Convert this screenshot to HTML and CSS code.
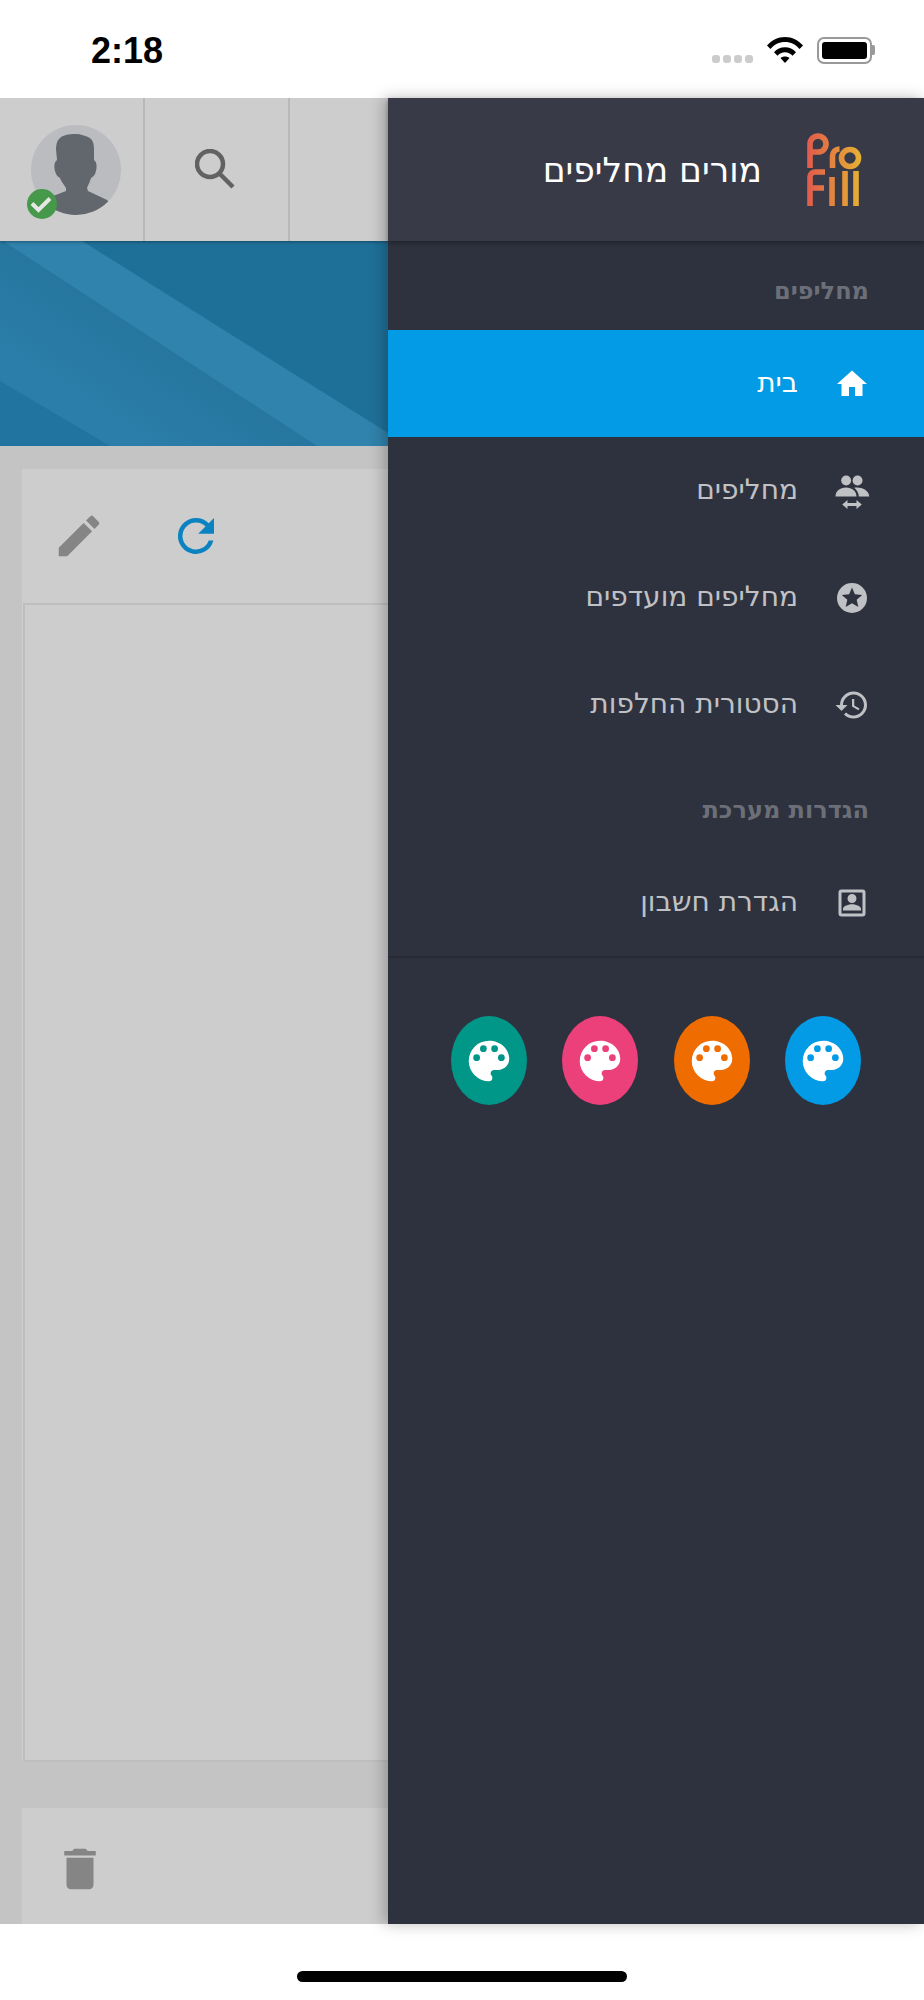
FILE: index.html
```html
<!DOCTYPE html>
<html lang="he">
<head>
    <meta charset="UTF-8">
    <meta name="viewport" content="width=device-width, initial-scale=1.0">
    <title>מורים מחליפים</title>
    <link rel="stylesheet" href="styles.css">
</head>
<body>
    <!-- Status bar -->
    <div class="status-bar">
        <div class="status-time">2:18</div>
        <div class="status-icons">
            <div class="signal-dots"><span></span><span></span><span></span><span></span></div>
            <svg class="wifi" viewBox="0 0 36 26"><path d="M0 8.600C4.500 3.200 11 0 18 0s13.500 3.200 18 8.600l-3.500 3.500C28.900 7.600 23.800 5 18 5S7.100 7.600 3.500 12.100z"/><path d="M7 15.200c2.800-3.100 6.700-4.900 11-4.900s8.200 1.800 11 4.900l-3.500 3.600c-1.900-2.200-4.500-3.500-7.500-3.500s-5.600 1.300-7.500 3.500z"/><path d="M13.500 21c1.200-1 2.800-1.500 4.500-1.500s3.300.5 4.500 1.500L18 26z"/></svg>
            <div class="battery"><div class="battery-fill"></div></div>
        </div>
    </div>

    <div class="screen">
        <!-- Page behind the drawer -->
        <div class="page">
            <div class="topbar">
                <div class="topbar-cell avatar-cell">
                    <div class="avatar">
                        <svg viewBox="0 0 90 90"><path d="M28 14C31 10 38 9 45 9C50 9 54 11 57 12C62 14 63 19 63 24L63 35C66 37 66 42 65 46C64 50 62 52 60 53C59 57 57 60 56 63L57 66L76 75L90 90L0 90L12 75L35 66L35 63C33 60 30 56 29 53C27 52 25 50 24 46C23 42 23 37 26 35L25 24C25 20 26 16 28 14Z"/></svg>
                    </div>
                    <div class="avatar-badge">
                        <svg viewBox="0 0 30 30"><path d="M5 14.500l6.500 6.500L23 9.500"/></svg>
                    </div>
                </div>
                <div class="topbar-cell">
                    <svg class="search-icon" viewBox="0 0 40 40"><circle cx="15" cy="15" r="13"/><path d="M24 24l14 14"/></svg>
                </div>
                <div class="topbar-cell"></div>
            </div>
            <div class="banner">
                <svg viewBox="0 0 388 205">
                    <defs>
                        <linearGradient id="bannerShade" gradientUnits="userSpaceOnUse" x1="160" y1="102" x2="110" y2="180">
                            <stop offset="0" stop-color="#26769f"/>
                            <stop offset="1" stop-color="#2b7ea9"/>
                        </linearGradient>
                    </defs>
                    <rect width="388" height="205" fill="#1f7099"/>
                    <polygon points="0,0 82,0 388,192 388,205 0,205" fill="url(#bannerShade)"/>
                    <polygon points="3,0 82,0 388,192 388,205 317,205" fill="#3083ac"/>
                    <polygon points="0,140 110,205 0,205" fill="#21749f"/>
                </svg>
            </div>
            <div class="page-body">
                <div class="card card-main">
                    <div class="card-tools">
                        <svg class="tool-icon edit-icon" viewBox="0 0 24 24"><path d="M3 17.250V21h3.750L17.810 9.940l-3.750-3.750L3 17.250zM20.710 7.040a1 1 0 0 0 0-1.410l-2.340-2.340a1 1 0 0 0-1.410 0l-1.830 1.830 3.750 3.750 1.830-1.830z"/></svg>
                        <svg class="tool-icon refresh-icon" viewBox="0 0 24 24"><path d="M17.650 6.350A7.958 7.958 0 0 0 12 4a8 8 0 1 0 7.730 10h-2.080A6 6 0 1 1 12 6c1.660 0 3.140.69 4.220 1.780L13 11h7V4l-2.350 2.350z"/></svg>
                    </div>
                    <div class="card-content"></div>
                </div>
                <div class="card card-bottom">
                    <svg class="tool-icon trash-icon" viewBox="0 0 24 24"><path d="M6 19c0 1.100.9 2 2 2h8c1.100 0 2-.9 2-2V7H6v12zM19 4h-3.500l-1-1h-5l-1 1H5v2h14V4z"/></svg>
                </div>
            </div>
        </div>

        <!-- Drawer -->
        <div class="drawer">
            <div class="drawer-header">
                <svg class="logo" viewBox="0 0 55 73">
                    <defs>
                        <linearGradient id="logoGrad" gradientUnits="userSpaceOnUse" x1="0" y1="0" x2="55" y2="0">
                            <stop offset="0" stop-color="#e25a4c"/>
                            <stop offset="1" stop-color="#e6b332"/>
                        </linearGradient>
                    </defs>
                    <g fill="none" stroke="url(#logoGrad)" stroke-width="5.600">
                        <path d="M3 35V11a8 8 0 0 1 16 0 8 8 0 0 1-8 8H3"/>
                        <path d="M25.500 35V23a7 7 0 0 1 7-7"/>
                        <circle cx="43" cy="25" r="8.500"/>
                        <path d="M3 73V44a5 5 0 0 1 5-5h10M3 55h14"/>
                        <path d="M25 44v29M38 38v35M49 38v35"/>
                    </g>
                </svg>
                <div class="drawer-title">מורים מחליפים</div>
            </div>
            <div class="drawer-body">
                <div class="section-title">מחליפים</div>
                <div class="menu-item active">
                    <svg class="menu-icon" viewBox="0 0 24 24"><path d="M10 20v-6h4v6h5v-8h3L12 3 2 12h3v8z"/></svg>
                    <span>בית</span>
                </div>
                <div class="menu-item">
                    <svg class="menu-icon" viewBox="0 0 24 24"><circle cx="8.100" cy="5" r="3.300"/><circle cx="15.700" cy="5" r="3.300"/><path d="M1 15.700c0-3.600 3-6 7-6s7 2.400 7 6zM13.500 9.800c4-.8 10 1.400 10 5.900h-7c0-2-1-4.300-3-5.900z"/><path d="M5.500 21L9 18v2h6v-2l3.500 3-3.500 3v-2H9v2z"/></svg>
                    <span>מחליפים</span>
                </div>
                <div class="menu-item">
                    <svg class="menu-icon" viewBox="0 0 24 24"><path d="M12 2a10 10 0 1 0 0 20 10 10 0 0 0 0-20zm4.240 16L12 15.450 7.770 18l1.120-4.810-3.730-3.230 4.920-.42L12 5l1.920 4.530 4.920.42-3.730 3.230L16.230 18z"/></svg>
                    <span>מחליפים מועדפים</span>
                </div>
                <div class="menu-item">
                    <svg class="menu-icon" viewBox="0 0 24 24"><path d="M13 3a9 9 0 0 0-9 9H1l3.890 3.890.07.140L9 12H6a7 7 0 1 1 2.050 4.950l-1.420 1.420A8.954 8.954 0 0 0 13 21a9 9 0 0 0 0-18zm-1 5v5l4.280 2.540.72-1.210-3.500-2.080V8H12z"/></svg>
                    <span>הסטורית החלפות</span>
                </div>
                <div class="section-title section-second">הגדרות מערכת</div>
                <div class="menu-item">
                    <svg class="menu-icon" viewBox="0 0 24 24"><path d="M3 5v14a2 2 0 0 0 2 2h14a2 2 0 0 0 2-2V5a2 2 0 0 0-2-2H5a2 2 0 0 0-2 2zm16 14H5V5h14v14zM12 12a3 3 0 1 0 0-6 3 3 0 0 0 0 6zm6 5v-1c0-2-4-3.100-6-3.100S6 14 6 16v1h12z"/></svg>
                    <span>הגדרת חשבון</span>
                </div>
                <div class="theme-row">
                    <div class="theme-dot theme-blue"><svg viewBox="0 0 24 24"><use href="#palette"/></svg></div>
                    <div class="theme-dot theme-orange"><svg viewBox="0 0 24 24"><use href="#palette"/></svg></div>
                    <div class="theme-dot theme-pink"><svg viewBox="0 0 24 24"><use href="#palette"/></svg></div>
                    <div class="theme-dot theme-teal"><svg viewBox="0 0 24 24"><use href="#palette"/></svg></div>
                </div>
            </div>
        </div>
    </div>

    <div class="home-area"><div class="home-indicator"></div></div>

    <svg class="svg-defs" width="0" height="0">
        <defs>
            <path id="palette" d="M12 3a9 9 0 0 0 0 18c.83 0 1.500-.67 1.500-1.500 0-.39-.15-.74-.39-1.010-.23-.26-.38-.61-.38-.99 0-.83.67-1.500 1.500-1.500H16c2.760 0 5-2.240 5-5 0-4.420-4.030-8-9-8zm-5.500 9a1.500 1.500 0 1 1 0-3 1.500 1.500 0 0 1 0 3zm3-4a1.500 1.500 0 1 1 0-3 1.500 1.500 0 0 1 0 3zm5 0a1.500 1.500 0 1 1 0-3 1.500 1.500 0 0 1 0 3zm3 4a1.500 1.500 0 1 1 0-3 1.500 1.500 0 0 1 0 3z"/>
        </defs>
    </svg>
</body>
</html>
```
FILE: styles.css
```css
* {
    margin: 0;
    padding: 0;
    box-sizing: border-box;
}

body {
    width: 924px;
    height: 2000px;
    overflow: hidden;
    background-color: #fff;
    font-family: "DejaVu Sans", sans-serif;
}

/* Status bar */
.status-bar {
    display: flex;
    justify-content: space-between;
    align-items: center;
    height: 98px;
    padding: 4px 52px 0 91px;
}

.status-time {
    font-family: "Liberation Sans", sans-serif;
    font-size: 36px;
    font-weight: bold;
    color: #000;
}

.status-icons {
    display: flex;
    align-items: center;
    height: 40px;
    margin-top: -2px;
}

.signal-dots {
    display: flex;
    gap: 3px;
    margin-top: 18px;
    margin-right: 14px;
}

.signal-dots span {
    width: 8px;
    height: 8px;
    border-radius: 3px;
    background-color: #ccc;
}

.wifi {
    width: 36px;
    height: 26px;
    margin-right: 14px;
    fill: #000;
}

.battery {
    position: relative;
    width: 55px;
    height: 27px;
    padding: 3px;
    border: 2px solid #999;
    border-radius: 7px;
}

.battery::after {
    content: "";
    position: absolute;
    top: 6px;
    right: -5px;
    width: 3px;
    height: 10px;
    background-color: #999;
    border-radius: 0 2px 2px 0;
}

.battery-fill {
    width: 100%;
    height: 100%;
    background-color: #000;
    border-radius: 3px;
}

/* Page behind the drawer */
.screen {
    display: flex;
    height: 1826px;
}

.page {
    width: 388px;
    flex-shrink: 0;
    display: flex;
    flex-direction: column;
    overflow: hidden;
    background-color: #c4c4c4;
}

.topbar {
    position: relative;
    display: flex;
    height: 143px;
    flex-shrink: 0;
    background-color: #cdcdcd;
    box-shadow: 0 1px 3px rgba(0, 0, 0, 0.35);
}

.topbar-cell {
    position: relative;
    display: flex;
    align-items: center;
    justify-content: center;
    width: 145px;
    border-right: 2px solid #b8b8b8;
}

.topbar-cell:last-child {
    flex: 1;
    border-right: none;
}

.avatar {
    width: 90px;
    height: 90px;
    margin-left: 8px;
    overflow: hidden;
    border-radius: 50%;
    background-color: #bbbcbf;
}

.avatar svg {
    display: block;
    fill: #62666d;
}

.avatar-badge {
    position: absolute;
    left: 27px;
    top: 91px;
    width: 30px;
    height: 30px;
    border-radius: 50%;
    background-color: #46984a;
}

.avatar-badge svg {
    display: block;
    fill: none;
    stroke: #e6e6e6;
    stroke-width: 4;
}

.search-icon {
    width: 40px;
    height: 40px;
    margin: 0 4px 2px 0;
    fill: none;
    stroke: #626262;
    stroke-width: 4.500;
}

.banner {
    height: 205px;
    flex-shrink: 0;
}

.banner svg {
    display: block;
    width: 388px;
    height: 205px;
}

.page-body {
    flex: 1;
    display: flex;
    flex-direction: column;
    padding: 23px 0 0 22px;
}

.card {
    background-color: #cdcdcd;
}

.card-tools {
    display: flex;
    align-items: center;
    gap: 63px;
    height: 134px;
    padding-left: 30px;
}

.tool-icon {
    width: 54px;
    height: 54px;
}

.edit-icon, .trash-icon {
    fill: #858585;
}

.refresh-icon {
    fill: #0a83c0;
}

.card-content {
    height: 1159px;
    margin-left: 1px;
    border: 2px solid #bebebe;
    border-right: none;
}

.card-main {
    margin-bottom: 46px;
}

.card-bottom {
    flex: 1;
    display: flex;
    align-items: center;
    padding: 5px 0 0 31px;
}

/* Drawer */
.drawer {
    width: 536px;
    display: flex;
    flex-direction: column;
    direction: rtl;
    background-color: #2e323e;
    box-shadow: -4px 0 14px rgba(0, 0, 0, 0.25);
    z-index: 1;
}

.drawer-header {
    display: flex;
    align-items: center;
    height: 143px;
    flex-shrink: 0;
    padding-right: 62px;
    background-color: #383b47;
    box-shadow: 0 2px 4px rgba(0, 0, 0, 0.3);
}

.logo {
    width: 55px;
    height: 73px;
    margin-left: 45px;
}

.drawer-title {
    font-size: 34.500px;
    color: #fff;
}

.drawer-body {
    flex: 1;
}

.section-title {
    height: 89px;
    padding: 36px 55px 0 0;
    font-size: 24px;
    font-weight: bold;
    color: #6c6f78;
}

.section-second {
    height: 91px;
    padding-top: 38px;
}

.menu-item {
    display: flex;
    align-items: center;
    gap: 36px;
    height: 107px;
    padding-right: 54px;
    font-size: 28px;
    color: #c0c1c5;
}

.menu-item span {
    margin-top: -2px;
}

.menu-item.active {
    background-color: #039be5;
    color: #fff;
}

.menu-icon {
    width: 36px;
    height: 36px;
    fill: currentColor;
}

.theme-row {
    display: flex;
    gap: 35.500px;
    padding: 58px 63px 0 0;
    border-top: 2px solid #272a35;
}

.theme-dot {
    display: flex;
    align-items: center;
    justify-content: center;
    width: 76px;
    height: 89px;
    border-radius: 50%;
}

.theme-dot svg {
    width: 54px;
    height: 54px;
    fill: #fff;
}

.theme-blue { background-color: #039be5; }
.theme-orange { background-color: #ef6c00; }
.theme-pink { background-color: #ec407a; }
.theme-teal { background-color: #009688; }

/* Home indicator */
.home-area {
    display: flex;
    justify-content: center;
    padding-top: 47px;
}

.home-indicator {
    width: 330px;
    height: 11px;
    border-radius: 6px;
    background-color: #000;
}

.svg-defs {
    position: absolute;
}
```
